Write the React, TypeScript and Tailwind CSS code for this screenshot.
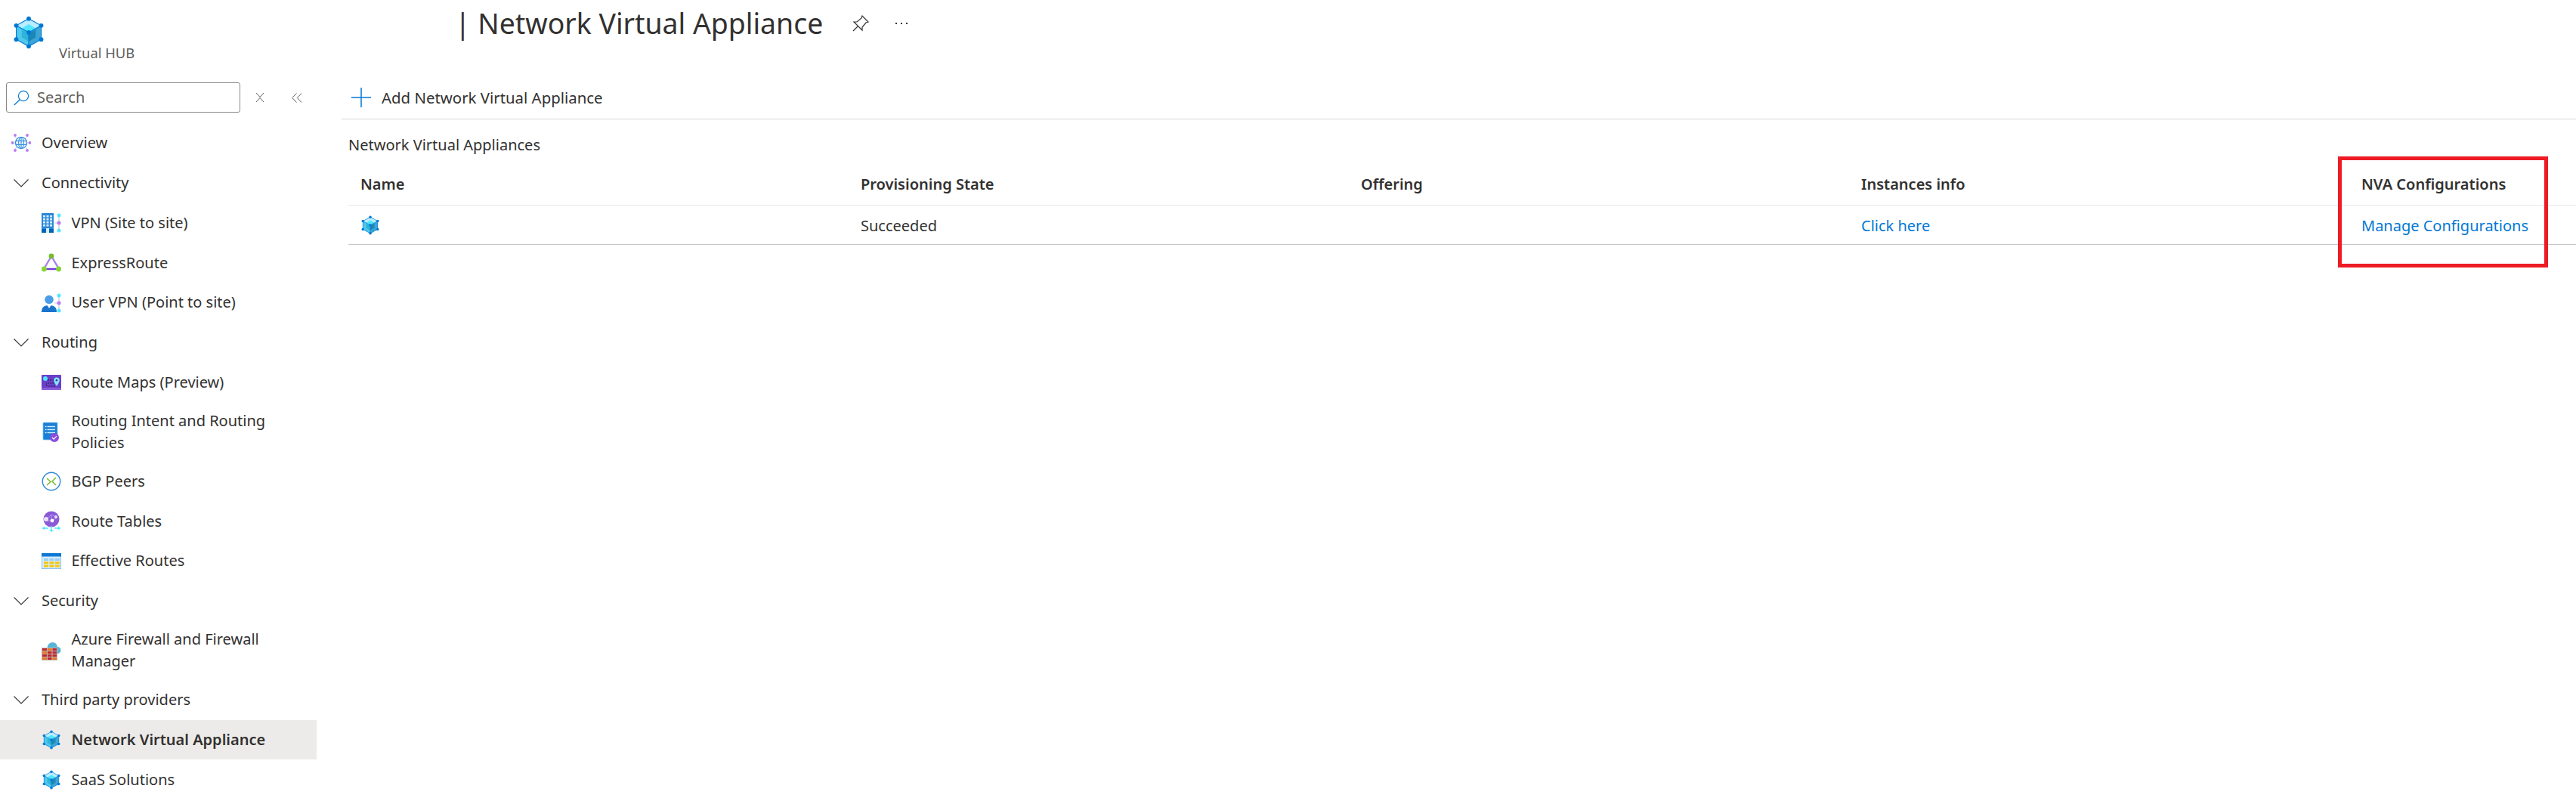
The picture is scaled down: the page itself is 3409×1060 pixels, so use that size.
import React from "react";

const Nva = ({ size = 26 }: { size?: number }) => (
  <svg width={size} height={size} viewBox="0 0 44 48" className="shrink-0">
    <path d="M22 4 40 14v20L22 44 4 34V14z" fill="#5bc8ee" />
    <path d="M22 4 40 14 22 24 4 14z" fill="#b9ecff" />
    <path d="M22 12 32 18 22 24 12 18z" fill="#50e6ff" />
    <path d="M4 14 22 24v20L4 34z" fill="#50c8ec" />
    <path d="M22 24 40 14v20L22 44z" fill="#3aa5d6" />
    <path d="M12 20 22 25v12L12 31z" fill="#2fb4d8" />
    <path d="M22 25 32 20v11L22 37z" fill="#1c87b4" />
    <path d="M22 4 40 14v20L22 44 4 34V14zM22 24V44M22 24 4 14M22 24 40 14" fill="none" stroke="#0078d4" strokeWidth="1.2" />
    {[[22, 4], [40, 14], [40, 34], [22, 44], [4, 34], [4, 14], [22, 24]].map(([x, y], i) => (
      <circle key={i} cx={x} cy={y} r="3.2" fill="#0078d4" />
    ))}
  </svg>
);

const Globe = () => (
  <svg width="26" height="26" viewBox="0 0 26 26" className="shrink-0">
    <path d="M5 5 21 21M21 5 5 21M1 13H25" stroke="#a9d8f5" strokeWidth="1" />
    {[[5, 3], [21, 3], [1.5, 13], [24.5, 13], [5, 23], [21, 23]].map(([x, y], i) => (
      <circle key={i} cx={x} cy={y} r="1.9" fill="#b77af4" />
    ))}
    <circle cx="13" cy="13" r="7.5" fill="#e8f4fd" stroke="#2b88d8" strokeWidth="1.2" />
    <ellipse cx="13" cy="13" rx="3.4" ry="7.5" fill="none" stroke="#2b88d8" strokeWidth="1" />
    <path d="M5.8 10.5H20.2M5.8 15.5H20.2M13 5.5V20.5" stroke="#2b88d8" strokeWidth="1" />
  </svg>
);

const Spoke = () => (
  <>
    <path d="M23 4V22M17 13H23" stroke="#c9c7d6" strokeWidth="1.2" />
    <circle cx="23" cy="3" r="2.5" fill="#50e6ff" />
    <circle cx="23" cy="13" r="2.5" fill="#b77af4" />
    <circle cx="23" cy="23" r="2.5" fill="#50e6ff" />
  </>
);

const Vpn = () => (
  <svg width="26" height="26" viewBox="0 0 26 26" className="shrink-0">
    <rect x="0" y="0" width="16" height="26" fill="#2b88d8" />
    <rect x="0" y="21" width="16" height="5" fill="#0063b1" />
    {[3, 7, 11, 15].map((y) =>
      [2, 6.5, 11].map((x) => <rect key={`${x}-${y}`} x={x} y={y} width="3" height="2.6" fill="#d5ecfb" />),
    )}
    <rect x="6" y="20" width="4" height="6" fill="#d5ecfb" />
    <Spoke />
  </svg>
);

const Express = () => (
  <svg width="26" height="26" viewBox="0 0 26 26" className="shrink-0">
    <path d="M13 4 3 21H23z" fill="none" stroke="#a67af4" strokeWidth="2.2" />
    <path d="M3 21H23" stroke="#773adc" strokeWidth="2.4" />
    <circle cx="13" cy="4" r="3.4" fill="#76bc2d" />
    <circle cx="3.4" cy="21" r="3.4" fill="#86d633" />
    <circle cx="22.6" cy="21" r="3.4" fill="#86d633" />
  </svg>
);

const UserVpn = () => (
  <svg width="26" height="26" viewBox="0 0 26 26" className="shrink-0">
    <circle cx="10" cy="8.5" r="5.8" fill="#4b9de8" />
    <path d="M0 25c0-6 3-9 10-9s10 3 10 9z" fill="#1a73cc" />
    <path d="M7.5 16 10 20l2.5-4z" fill="#ffffff" />
    <Spoke />
  </svg>
);

const RouteMaps = () => (
  <svg width="26" height="20" viewBox="0 0 26 20" className="shrink-0">
    <rect width="26" height="20" rx="1" fill="#6a3fc8" />
    <rect width="26" height="3" y="17" fill="#8a5ad8" />
    <circle cx="5" cy="5" r="3" fill="#50e6ff" />
    <path d="M8 7h8c2 0 2 3 0 4H8c-3 1-3 4 0 4h10" fill="none" stroke="#201a40" strokeWidth="0.9" strokeDasharray="2 1.2" />
    <path d="M20 3.5a3.8 3.8 0 0 1 3.8 3.8C23.8 10 20 15 20 15s-3.8-5-3.8-7.7A3.8 3.8 0 0 1 20 3.5z" fill="#7fe6ff" />
    <circle cx="20" cy="7.3" r="1.3" fill="#4a2ca8" />
  </svg>
);

const Policy = () => (
  <svg width="26" height="26" viewBox="0 0 26 26" className="shrink-0">
    <rect x="2" y="0" width="19" height="23" rx="1" fill="#1a7fd6" stroke="#7cc0f0" strokeWidth="0.8" />
    <path d="M4.5 5.5H18M4.5 9.5H18M4.5 13.5H18" stroke="#cfe8fb" strokeWidth="1.4" strokeDasharray="2 1 12 0" />
    <circle cx="17" cy="20" r="6" fill="#8a4fd8" />
    <path d="m14 20 2.2 2.2L20 18" fill="none" stroke="#fff" strokeWidth="1.1" />
  </svg>
);

const Bgp = () => (
  <svg width="26" height="26" viewBox="0 0 26 26" className="shrink-0">
    <circle cx="13" cy="13" r="11.7" fill="#fff" stroke="#2b88d8" strokeWidth="1.4" />
    <path d="m7 9 5 4.5L7 18M19 8l-5 5 5 5" fill="none" stroke="#76bc2d" strokeWidth="1.5" />
  </svg>
);

const RouteTable = () => (
  <svg width="26" height="28" viewBox="0 0 26 28" className="shrink-0">
    <circle cx="13" cy="11" r="10.5" fill="#8a5ad8" />
    <path d="M5 13 13 5l8 4-8 4-8 0M13 5v8" fill="none" stroke="#b794ee" strokeWidth="1" />
    <circle cx="6" cy="11" r="3" fill="#e8e0f8" />
    <circle cx="14" cy="13" r="2.4" fill="#fff" />
    <circle cx="19" cy="8" r="2" fill="#e8e0f8" />
    <path d="M1 23H9M17 23H25M13 20V27" stroke="#50e6ff" strokeWidth="1.4" />
    <path d="M4 20.5 1 23l3 2.5zM22 20.5 25 23l-3 2.5zM10 25l3 3 3-3z" fill="#50e6ff" />
  </svg>
);

const Effective = () => (
  <svg width="26" height="21" viewBox="0 0 26 21" className="shrink-0">
    <rect width="26" height="21" fill="#d5ecfb" stroke="#2b88d8" strokeWidth="0.8" />
    <rect width="26" height="4.5" fill="#0f78d4" />
    {[0, 1, 2].map((r) =>
      [0, 1, 2].map((c) => (
        <rect key={`${r}-${c}`} x={3 + c * 7.4} y={7 + r * 4.3} width="6" height="3" fill={r === 0 ? "#9ccff2" : "#f2c811"} />
      )),
    )}
  </svg>
);

const Firewall = () => (
  <svg width="26" height="28" viewBox="0 0 26 28" className="shrink-0">
    <path d="M8 12a7 7 0 0 1 7-9 7 7 0 0 1 6 6 4.5 4.5 0 0 1 0 9H8z" fill="#59b4d9" />
    <rect x="0" y="10" width="21" height="17" fill="#b8b8b8" />
    {[0, 1, 2, 3].map((r) => (
      <React.Fragment key={r}>
        <rect x="1" y={11 + r * 4} width="6" height="3" fill={r % 2 ? "#e8761a" : "#c1272d"} />
        <rect x="8" y={11 + r * 4} width="5.5" height="3" fill={r === 1 ? "#c1272d" : r === 0 ? "#e8761a" : "#c1272d"} />
        <rect x="14.5" y={11 + r * 4} width="5.5" height="3" fill={r === 3 ? "#e8761a" : "#c1272d"} />
      </React.Fragment>
    ))}
  </svg>
);

const Section = ({ label }: { label: string }) => (
  <div className="flex h-[52.8px] items-center">
    <svg width="20" height="11" viewBox="0 0 20 11" className="ml-[18px] mr-[17px] shrink-0">
      <path d="m.5.5 9.5 9.5L19.500.5" fill="none" stroke="#323130" strokeWidth="1.1" />
    </svg>
    <span>{label}</span>
  </div>
);

const Item = ({
  icon,
  label,
  tall,
  active,
}: {
  icon: React.ReactNode;
  label: string;
  tall?: boolean;
  active?: boolean;
}) => (
  <div className={`flex items-center pl-[55px] ${tall ? "h-[78px]" : "h-[52.8px]"} ${active ? "bg-[#edebe9] font-semibold" : ""}`}>
    <span className="flex w-[39.5px] shrink-0 items-center">{icon}</span>
    <span className="w-[300px] leading-[28.5px]">{label}</span>
  </div>
);

export default function App() {
  return (
    <div className="relative flex h-[1060px] w-[3409px] overflow-hidden bg-white font-['Noto_Sans',sans-serif] text-[20px] text-[#323130]">
      <aside className="w-[419px] shrink-0">
        <div className="relative h-[109px]">
          <div className="absolute left-[16px] top-[21px]">
            <Nva size={44} />
          </div>
          <div className="absolute left-[78px] top-[57px] text-[18.400px] leading-[26px] text-[#605e5c]">Virtual HUB</div>
        </div>
        <div className="flex items-center">
          <div className="ml-[8px] flex h-[40px] w-[310px] items-center rounded-[3px] border border-[#8a8886] pl-[9px] text-[#605e5c]">
            <svg width="21" height="21" viewBox="0 0 21 21" className="mr-[10px] shrink-0">
              <circle cx="13" cy="8" r="6.6" fill="none" stroke="#0078d4" strokeWidth="1.1" />
              <path d="M8.300 12.700 .8 20" stroke="#0078d4" strokeWidth="1.300" />
            </svg>
            Search
          </div>
          <svg width="12" height="14" viewBox="0 0 12 14" className="ml-[20px] shrink-0">
            <path d="m1 1 5 5.500L11 1M1 13l5-5.500L11 13" fill="none" stroke="#605e5c" strokeWidth="1" />
          </svg>
          <svg width="14" height="13" viewBox="0 0 14 13" className="ml-[36px] shrink-0">
            <path d="M6.500.5.800 6.500l5.700 6M13 .5 7.300 6.500l5.700 6" fill="none" stroke="#605e5c" strokeWidth="1" />
          </svg>
        </div>
        <div className="mt-[14px]">
          <div className="flex h-[52.8px] items-center pl-[15px]">
            <span className="w-[40px] shrink-0">
              <Globe />
            </span>
            Overview
          </div>
          <Section label="Connectivity" />
          <Item icon={<Vpn />} label="VPN (Site to site)" />
          <Item icon={<Express />} label="ExpressRoute" />
          <Item icon={<UserVpn />} label="User VPN (Point to site)" />
          <Section label="Routing" />
          <Item icon={<RouteMaps />} label="Route Maps (Preview)" />
          <Item icon={<Policy />} label="Routing Intent and Routing Policies" tall />
          <Item icon={<Bgp />} label="BGP Peers" />
          <Item icon={<RouteTable />} label="Route Tables" />
          <Item icon={<Effective />} label="Effective Routes" />
          <Section label="Security" />
          <Item icon={<Firewall />} label="Azure Firewall and Firewall Manager" tall />
          <Section label="Third party providers" />
          <Item icon={<Nva />} label="Network Virtual Appliance" active />
          <Item icon={<Nva />} label="SaaS Solutions" />
        </div>
      </aside>

      <main className="min-w-0 flex-1 pl-[33px]">
        <div className="flex h-[60px] items-center pl-[150px] pt-[1px]">
          <span className="text-[37.400px] leading-[60px]">| Network Virtual Appliance</span>
          <svg width="24" height="24" viewBox="0 0 24 24" className="ml-[38px] shrink-0">
            <path d="M14 2 22 10 19 11 14 17 14 21 3 10 7 10 13 5zM8 16 2 22" fill="none" stroke="#323130" strokeWidth="1.200" />
          </svg>
          <span className="ml-[34px] flex gap-[5px]">
            <i className="h-[2px] w-[2px] bg-[#323130]" />
            <i className="h-[2px] w-[2px] bg-[#323130]" />
            <i className="h-[2px] w-[2px] bg-[#323130]" />
          </span>
        </div>
        <div className="flex h-[98px] items-end">
          <div className="flex h-[37px] w-full items-start border-b border-[#d6d4d2]">
            <div className="-mt-[7px] flex items-center text-[20.400px]">
              <svg width="26" height="26" viewBox="0 0 26 26" className="ml-[13px] mr-[14px] shrink-0">
                <path d="M13 0V26M0 13H26" stroke="#0078d4" strokeWidth="1.500" />
              </svg>
              Add Network Virtual Appliance
            </div>
          </div>
        </div>
        <div className="pl-[9px]">
          <div className="flex h-[69px] items-center pb-[1px]">Network Virtual Appliances</div>
          <div className="grid h-[45px] grid-cols-[662px_662px_662px_662px_1fr] items-center border-b border-[#e8e6e4] pb-[10px] pl-[16px] font-semibold">
            <span>Name</span>
            <span>Provisioning State</span>
            <span>Offering</span>
            <span>Instances info</span>
            <span>NVA Configurations</span>
          </div>
          <div className="grid h-[52px] grid-cols-[662px_662px_662px_662px_1fr] items-center border-b border-[#c8c6c4] pl-[16px] pt-[2px]">
            <span className="-mt-[2px]">
              <Nva />
            </span>
            <span>Succeeded</span>
            <span />
            <span className="text-[#0078d4]">Click here</span>
            <span className="text-[#0078d4]">Manage Configurations</span>
          </div>
        </div>
      </main>

      <div className="absolute left-[3094px] top-[207px] h-[147px] w-[278px] border-[5px] border-[#ed1c24]" />
    </div>
  );
}
